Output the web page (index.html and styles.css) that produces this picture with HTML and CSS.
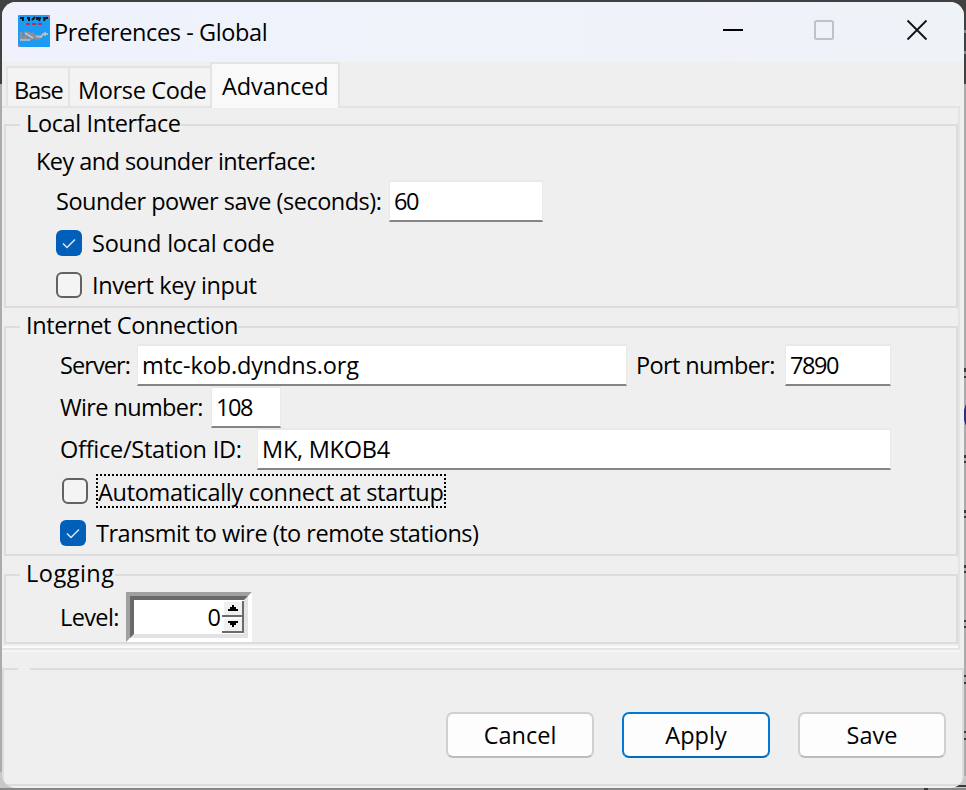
FILE: index.html
```html
<!DOCTYPE html>
<html lang="en">
<head>
<meta charset="utf-8">
<title>Preferences - Global</title>
<link rel="stylesheet" href="styles.css">
</head>
<body>
<svg class="backdrop" width="966" height="790" viewBox="0 0 966 790" aria-hidden="true">
  <path fill="#414141" d="M0 0h966v84H0z"/>
  <path fill="#ababab" d="M0 84h966v706H0z"/>
  <path fill="#c8c8c8" d="M0 772h24v18H0zM920 776h46v14h-46z"/>
  <path fill="#888" d="M964 30h2v3h-2zM964 51h2v3h-2zM0 788h966v2H0z"/>
  <path fill="#3a3a3a" d="M964 368h2v4h-2zM964 376h2v2h-2zM964 455h2v3h-2zM964 461h2v2h-2zM964 510h2v3h-2zM964 516h2v2h-2zM964 565h2v3h-2zM964 571h2v2h-2zM964 620h2v2h-2zM964 626h2v2h-2zM964 675h2v2h-2zM964 682h2v2h-2zM964 731h2v2h-2zM964 738h2v2h-2zM954 785h12v2h-12zM924 788h4v2h-4z"/>
  <path fill="#302c84" d="M964 410l2-6v22l-2-6z"/>
</svg>
<main class="window">
  <header class="titlebar">
    <svg class="app-icon" width="32" height="32" viewBox="0 0 32 32">
      <path fill="#1c9bf4" d="M0 0h32v32H0z"/>
      <path fill="#f4607c" d="M0 0h2v1H0zM30 0h2v2h-2zM0 30h2v2H0zM31 31h1v1h-1z"/>
      <path fill="none" stroke="#101820" stroke-width="2" d="M2 3h4M5 3v3M9 3h3M10 5h2M14 5l3-3M19 2v3M18 3h4l-1 3M25 3h5M27 3l-1 3"/>
      <path fill="#c02c50" d="M8 8h4v2H8zM14 8h4v2h-4zM20 8h4v2h-4z"/>
      <path fill="none" stroke="#8b9096" stroke-width="3" d="M3 17v6h5v-5l4 1v5l5-2-3-4M17 23h4l2-3"/>
      <path fill="none" stroke="#c2c5c8" stroke-width="1.6" d="M2 25h10M7 18l8 5M18 21l5 1 2-3h5M27 17v4"/>
    </svg>
    <h1 class="title">Preferences - Global</h1>
    <svg class="controls" width="206" height="22" viewBox="0 0 206 22">
      <path stroke="#000" stroke-width="2" d="M0 11h20"/>
      <rect x="92" y="2" width="18" height="18" rx="1.5" fill="none" stroke="#bfc2c6" stroke-width="2"/>
      <path stroke="#111" stroke-width="1.8" d="M184.500 1.500l19 19M203.500 1.500l-19 19"/>
    </svg>
  </header>
  <nav class="tabs">
    <span class="tab base"><span class="t-base">Base</span></span>
    <span class="tab morse"><span class="t-morse">Morse Code</span></span>
    <span class="tab active"><span class="t-adv">Advanced</span></span>
  </nav>
  <section class="pane">
    <fieldset class="group local">
      <legend><span class="t-local">Local Interface</span></legend>
      <div class="row heading"><span class="t-key">Key and sounder interface:</span></div>
      <div class="row power"><span class="label w-power"><span class="t-power">Sounder power save (seconds):</span></span><span class="field f-power">60</span></div>
      <div class="row sound"><span class="check on"><svg width="26" height="26" viewBox="0 0 26 26"><path d="M7 13.500l4 4 8-8"/></svg></span><span class="t-sound">Sound local code</span></div>
      <div class="row invert"><span class="check"></span><span class="t-invert">Invert key input</span></div>
    </fieldset>
    <fieldset class="group internet">
      <legend><span class="t-internet">Internet Connection</span></legend>
      <div class="row"><span class="label w-server"><span class="t-server">Server:</span></span><span class="field f-server"><span class="t-host">mtc-kob.dyndns.org</span></span><span class="label w-port"><span class="t-port">Port number:</span></span><span class="field f-port">7890</span></div>
      <div class="row"><span class="label w-wire"><span class="t-wire">Wire number:</span></span><span class="field f-wire">108</span></div>
      <div class="row"><span class="label w-office"><span class="t-office">Office/Station ID:</span></span><span class="field f-office"><span class="t-id">MK, MKOB4</span></span></div>
      <div class="row auto"><span class="check"></span><span class="focus"><span class="t-auto">Automatically connect at startup</span></span></div>
      <div class="row transmit"><span class="check on"><svg width="26" height="26" viewBox="0 0 26 26"><path d="M7 13.500l4 4 8-8"/></svg></span><span class="t-transmit">Transmit to wire (to remote stations)</span></div>
    </fieldset>
    <fieldset class="group logging">
      <legend><span class="t-logging">Logging</span></legend>
      <div class="row"><span class="label w-level"><span class="t-level">Level:</span></span>
        <span class="spinner"><span class="well"><span class="value">0</span>
          <svg width="22" height="32" viewBox="0 0 22 32"><path fill="#f0f0f0" d="M2 1h18v13H2zM2 18h18v12H2z"/><path fill="#6b6b6b" d="M0 14h22v2H0zM0 30h22v2H0zM20 0h2v32h-2z"/><path d="M10 4h2v2h2v2h2v2H6V8h2V6h2zM6 20h10v2h-2v2h-2v2h-2v-2H8v-2H6z"/></svg>
        </span></span></div>
    </fieldset>
  </section>
  <footer class="actions">
    <button class="btn"><span class="t-cancel">Cancel</span></button>
    <button class="btn default"><span class="t-apply">Apply</span></button>
    <button class="btn"><span class="t-save">Save</span></button>
  </footer>
</main>
</body>
</html>
```

FILE: styles.css
```css
* { box-sizing: border-box; }
html, body { margin: 0; width: 966px; height: 790px; overflow: hidden; }
body { font: 23.5px/20px "Open Sans", "Noto Sans", sans-serif; font-stretch: 90%; color: #000; white-space: nowrap; }
.backdrop { position: absolute; left: 0; top: 0; z-index: -1; }
.window { width: 962px; height: 786px; margin: 2px; background: #efefef; border-radius: 14px; overflow: hidden; display: flex; flex-direction: column; }

.titlebar { height: 60px; flex: none; background: linear-gradient(90deg, #eff2fb, #eef3f8); display: flex; align-items: center; padding-left: 16px; }
.app-icon { margin-top: -2px; }
.title { margin: 0 0 0 4px; font: inherit; letter-spacing: -.4px; width: 669px; }
.controls { margin-top: -5px; flex: none; }

.tabs { height: 44px; flex: none; display: flex; align-items: flex-end; padding-left: 4px; }
.tab { height: 40px; display: flex; align-items: center; border: solid #e4e4e4; border-width: 2px 0 0 2px; background: #f3f3f3; padding: 5px 0 0 6px; }
.base { width: 62px; }
.morse { width: 142px; padding-left: 8px; }
.active { width: 130px; height: 46px; padding: 0 0 1px 10px; margin-bottom: -2px; border-width: 2px; border-bottom: 0; background: #f9f9f9; z-index: 1; }

.pane { width: 958px; height: 544px; flex: none; border: solid #e4e4e4; border-width: 2px 2px 2px 0; padding: 7px 0 0 2px; display: flex; flex-direction: column; gap: 9px; box-shadow: inset 0 -2px #fbfbfb, 0 2px #f5f5f5; }
.group { margin: 0; width: 954px; min-width: 0; flex: none; border: 2px solid #dcdcdc; padding: 0; }
.local { height: 193px; }
.internet { height: 239px; }
.logging { height: 79px; }
legend { margin-left: 14px; padding: 0 0 0 6px; height: 20px; line-height: 16px; }
.row { display: flex; align-items: center; height: 42px; padding-left: 54px; }
.label { flex: none; padding-bottom: 2px; }
.field { flex: none; height: 42px; margin-bottom: 2px; background: #fff; border: solid #e9e9e9; border-width: 2px 1px 2px; border-bottom-color: #858585; padding-left: 4px; display: flex; align-items: center; letter-spacing: -1.4px; }

.local .row { padding-left: 50px; }
.local .heading { height: 40px; margin-top: 6px; padding-left: 30px; }
.local .sound { height: 40px; }
.local .invert { height: 44px; }
.w-power { width: 333px; }
.f-power { width: 154px; }
.internet legend + .row { margin-top: 8px; }
.w-server { width: 77px; }
.f-server { width: 490px; }
.w-port { width: 158px; padding-left: 9px; }
.f-port { width: 106px; }
.w-wire { width: 151px; }
.f-wire { width: 70px; }
.w-office { width: 197px; }
.f-office { width: 634px; }

.check { width: 26px; height: 26px; flex: none; border: 2px solid #626262; border-radius: 6px; background: #f4f4f4; margin-right: 10px; }
.check.on { border: 0; background: #005fb8; }
.check svg { display: block; fill: none; stroke: #d9e8f6; stroke-width: 1.5; }
.auto { height: 40px; padding-left: 56px; }
.auto .check { margin-right: 8px; }
.transmit { height: 44px; }
.focus { width: 350px; height: 34px; border: 2px dotted #000; display: flex; align-items: center; padding-top: 1px; }

.logging .row { height: 50px; margin-top: 7px; align-items: center; }
.w-level { width: 66px; }
.logging .label { padding-bottom: 0; }
.spinner { width: 126px; height: 50px; border: 4px solid; border-color: #a0a0a0 #fff #fff #a0a0a0; }
.well { display: flex; height: 42px; border: 4px solid; border-color: #696969 #e3e3e3 #e3e3e3 #696969; background: #fff; align-items: center; justify-content: flex-end; }
.well svg { flex: none; }
.value { margin-right: 1px; }

/* per-label tracking */
.t-base { letter-spacing: -1px; }
.t-morse { letter-spacing: -.35px; }
.t-adv { letter-spacing: -.1px; }
.t-local, .t-internet { letter-spacing: -.38px; }
.t-key { letter-spacing: -.56px; }
.t-power { letter-spacing: -.5px; }
.t-sound { letter-spacing: -.2px; }
.t-invert { letter-spacing: -.4px; }
.t-server { letter-spacing: -.9px; }
.t-host { letter-spacing: -.13px; }
.t-port, .t-wire, .t-level { letter-spacing: -.63px; }
.t-office, .t-id { letter-spacing: -.25px; }
.t-auto { letter-spacing: -.3px; }
.t-transmit { letter-spacing: -.49px; }
.t-logging { letter-spacing: .5px; }

.actions { flex: none; height: 118px; margin-top: 18px; border: solid #dcdcdc; border-width: 0 2px 2px; background: linear-gradient(90deg, #dcdcdc 14px, #efefef 14px, #efefef 26px, #dcdcdc 26px) top / 100% 2px no-repeat; display: flex; gap: 28px; padding: 44px 0 0 442px; }
.btn { width: 148px; height: 46px; padding: 0; border: 2px solid #d0d0d0; border-bottom-color: #bcbcbc; border-radius: 7px; background: #fdfdfd; font: inherit; color: inherit; }
.btn.default { border-color: #0078d4; border-bottom-color: #006cbe; }
```
